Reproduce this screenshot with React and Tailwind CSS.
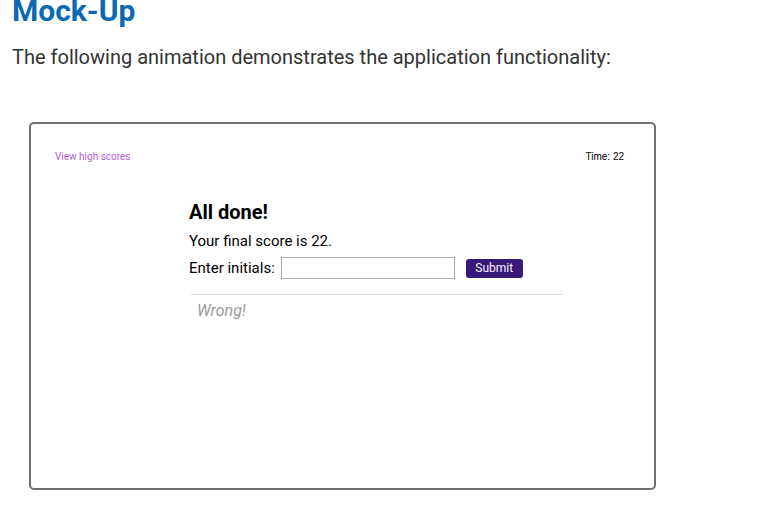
export default function App() {
  return (
    <div className="min-h-[510px] bg-white pl-3 font-['Roboto',sans-serif] overflow-hidden">
      <h1 className="-mt-[9px] text-[30px] font-bold leading-[40px] text-[#0a6ab1]">Mock-Up</h1>
      <p className="mt-[11px] text-[20px] leading-[30px] text-[#333333]">
        The following animation demonstrates the application functionality:
      </p>

      {/* framed animation still */}
      <div className="ml-[17px] mt-[50px] flex h-[368px] w-[627px] flex-col rounded-[5px] border-2 border-[#707070] px-[24px] pt-[26px]">
        <div className="flex items-center justify-between pr-[6px]">
          <a className="text-[10px] leading-[14px] text-[#b45fd6]">View high scores</a>
          <span className="font-['Liberation_Sans',sans-serif] text-[10px] leading-[14px] text-black">Time: 22</span>
        </div>

        <div className="ml-[134px] mt-[35px] w-[374px]">
          <h2 className="text-[20px] font-bold leading-[26px] text-black">All done!</h2>
          <p className="mt-[6px] text-[15px] leading-[20px] text-black">Your final score is 22.</p>
          <div className="mt-[6px] flex items-center">
            <label className="text-[15px] leading-[20px] text-black">Enter initials:</label>
            <input className="ml-[6px] h-[22px] w-[174px] border border-[#a9a9a9] bg-white" />
            <button className="ml-[11px] h-[19px] w-[57px] rounded-[3px] bg-[#37197a] text-[12px] leading-[19px] text-[#f4f0ff]">
              Submit
            </button>
          </div>
          <div className="ml-[2px] mt-[15px] border-t border-[#dcdcdc] pl-[6px] pt-[4px]">
            <span className="text-[16px] italic leading-[22px] text-[#9a9a9a]">Wrong!</span>
          </div>
        </div>
      </div>
    </div>
  );
}
